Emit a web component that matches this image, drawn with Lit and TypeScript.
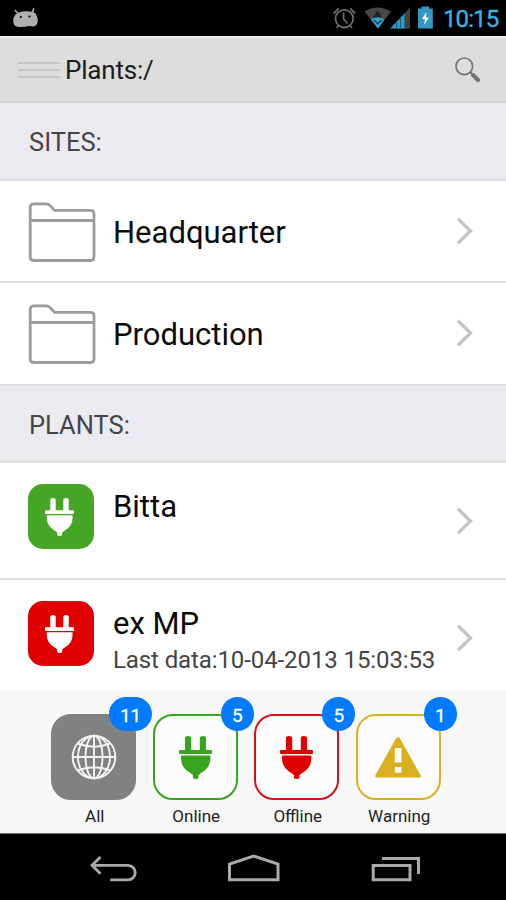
import { LitElement, html, css, svg } from "lit";
import { customElement, property } from "lit/decorators.js";
import { classMap } from "lit/directives/class-map.js";

const plug = svg`
  <path d="M5.800 2a3 2 0 0 1 6 0V14h8.400V2a3 2 0 0 1 6 0V14H31q1 0 1 1v2q0 1-1 1H1q-1 0-1-1v-2q0-1 1-1h4.800Z"/>
  <path d="M2 19.500h28.400v3q0 9.500-9 14.500l-2.500 2v2.500q0 1.500-2.700 1.500T13.500 41.500V39l-2.500-2q-9-5-9-14.500Z"/>`;

@customElement("status-bar")
class StatusBar extends LitElement {
  static styles = css`
    :host { display: flex; align-items: flex-start; justify-content: space-between; height: 36px; background: #000; box-sizing: border-box; }
    svg { display: block; }
    .right { display: flex; }
    .time { width: 63px; font: 400 24px/36px Roboto, sans-serif; color: #33b5e5; }
    .time span { display: block; letter-spacing: -0.9px; padding-top: 1px; -webkit-text-stroke: 0.3px #33b5e5; }
  `;
  render() {
    return html`
      <svg width="60" height="36" viewBox="0 0 60 36">
        <path d="M15.200 10.500l3 3M33.600 9l-1.600 4" stroke="#b0b0b0" stroke-width="1.700" stroke-linecap="round"/>
        <path d="M15.500 14.500Q19 11.500 25.500 11.300T35.500 13.200Q38 17 37.800 21T34 26.500L29 26l-4 .8-6 .2Q13.500 26.500 13.200 21.500 13.200 17 15.500 14.500Z" fill="#b0b0b0"/>
        <circle cx="20.800" cy="17" r="1.100"/><circle cx="29.500" cy="16.500" r="1.100"/>
      </svg>
      <div class="right">
        <svg width="110" height="36" viewBox="333 0 110 36">
          <g fill="none" stroke="#6c6c6c" stroke-width="1.800">
            <circle cx="344.300" cy="18.700" r="8.800"/>
            <path d="M343.600 12.500v6.500l3.800 4.500M333.600 13.500l5-5M350.200 8.500l5 5M338.500 25.500l-2 2.500M350 25.500l2 2.500"/>
          </g>
          <path d="M364.500 11.500Q377.500 3.500 390.800 11.500L378 28.500Z" fill="#484848"/>
          <path d="M377.500 10l5 9h-10Z" fill="#222"/>
          <path d="M370.800 19.500Q378 15 384.500 19.500L378 28.500Z" fill="#33a5d0"/>
          <path d="M374 20l3.800 3.800 3.800-3.800" fill="none" stroke="#143a4a" stroke-width="1.300"/>
          <path d="M410 7.500V28.500h-5V13Z" fill="#484036"/>
          <path d="M390 28.500L405 13V28.500Z" fill="#2f98c4"/>
          <path d="M396.500 21v8M400.500 17v12M404.800 13v16" stroke="#145a7a" stroke-width="1"/>
          <path d="M418 8.500h3.500v-2h7.500v2h3.800v20H418Z" fill="#3498c4"/>
          <path d="M426.500 12l-4.500 7h3l-1 6 5-7.500h-3Z" fill="#fff"/>
        </svg>
        <div class="time"><span>10:15</span></div>
      </div>`;
  }
}

@customElement("title-bar")
class TitleBar extends LitElement {
  static styles = css`
    :host { display: flex; align-items: center; height: 67px; box-sizing: border-box; background: #ddd; border-top: 2px solid #ededed; border-bottom: 2px solid #d6d6da; padding: 0 24px 0 18px; font: 26px/32px Roboto, sans-serif; color: #1c1c1c; }
    .menu { display: flex; flex-direction: column; gap: 5px; width: 42px; margin-right: 5px; }
    .menu i { height: 2px; background: #c6c6c6; }
    .title { flex: 1; letter-spacing: -0.2px; }
    svg { display: block; }
  `;
  render() {
    return html`
      <div class="menu"><i></i><i></i><i></i></div>
      <div class="title">Plants:/</div>
      <svg width="28" height="28" viewBox="454 55 28 28" fill="none" stroke="#747474">
        <circle cx="464.300" cy="65.300" r="8.300" stroke-width="1.700"/>
        <path d="M470 71l3 3" stroke-width="2"/>
        <path d="M473 74l5 5" stroke-width="4.200" stroke-linecap="round"/>
      </svg>`;
  }
}

@customElement("section-heading")
class SectionHeading extends LitElement {
  static styles = css`
    :host { display: block; height: 77.5px; box-sizing: border-box; background: #ebeaf1; border-bottom: 2px solid #dddde1; padding: 22px 29px 0; font: 25.5px/34px Roboto, sans-serif; color: #444446; }
  `;
  render() { return html`<slot></slot>`; }
}

@customElement("list-row")
class ListRow extends LitElement {
  @property() kind = "folder";
  @property() name = "";
  @property() detail = "";
  static styles = css`
    :host { display: block; background: #fff; color: #0a0a0a; font-family: Roboto, sans-serif; }
    .row { display: flex; height: 102.5px; box-sizing: border-box; padding: 0 32px 0 28px; border-bottom: 2px solid #e0e0e2; }
    .row.plant { height: 117px; }
    .icon { width: 68px; margin: 21px 17px 0 0; }
    .text { flex: 1; padding-top: 32px; }
    .plant .text { padding-top: 24px; }
    .name { font-size: 31px; line-height: 40px; }
    .detail { font-size: 24px; line-height: 30px; color: #444; margin-top: 1px; white-space: nowrap; letter-spacing: -0.1px; }
    .arrow { align-self: center; }
    .badge { width: 66px; height: 65px; box-sizing: border-box; padding: 1px 3px 0 0; border-radius: 15px; display: flex; align-items: center; justify-content: center; }
    .online { background: #46a524; }
    .offline { background: #e00000; }
    svg { display: block; }
  `;
  render() {
    const folder = this.kind === "folder";
    return html`
      <div class=${classMap({ row: true, plant: !folder })}>
        <div class="icon">
          ${folder
            ? html`<svg width="68" height="60" viewBox="0 0 68 60" fill="none" stroke="#9a9d9c" stroke-width="2.800">
                <path d="M2.200 5.500Q2.200 1.800 6 1.800H18.500Q21 1.800 22.500 4L26.500 8.400H62.500Q66 8.400 66 12V55Q66 58.500 62.500 58.500H6Q2.200 58.500 2.200 55ZM2.200 18.500H66"/></svg>`
            : html`<div class=${classMap({ badge: true, online: this.kind === "online", offline: this.kind === "offline" })}>
                <svg width="29" height="38" viewBox="0 0 32 43" preserveAspectRatio="none" fill="#fff">${plug}</svg></div>`}
        </div>
        <div class="text">
          <div class="name">${this.name}</div>
          ${this.detail ? html`<div class="detail">${this.detail}</div>` : ""}
        </div>
        <svg class="arrow" width="18" height="28" viewBox="0 0 18 28" fill="none" stroke="#c4c4c6" stroke-width="3.400"><path d="M2 1.800L14.500 14 2 26.200"/></svg>
      </div>`;
  }
}

@customElement("filter-tab")
class FilterTab extends LitElement {
  @property() kind = "all";
  @property() label = "";
  @property() count = "";
  static styles = css`
    :host { display: block; width: 85px; font-family: Roboto, sans-serif; }
    .tile { position: relative; width: 85px; height: 86px; box-sizing: border-box; border: 2px solid; border-radius: 20px; display: flex; align-items: center; justify-content: center; background: #fcfcfc; }
    .all { color: #808281; background: #808281; }
    .online { color: #38a31f; }
    .offline { color: #d8101a; }
    .offline svg { color: #e00000; }
    .warning { color: #dbb01f; }
    .count { position: absolute; top: -19px; right: -18px; min-width: 33px; height: 34px; box-sizing: border-box; padding: 3px 11px 0; border-radius: 17px; background: #007aff; color: #fff; font: 400 19px/32px Roboto, sans-serif; text-align: center; -webkit-text-stroke: 0.3px #fff; }
    .label { margin-top: 6px; text-align: center; font-size: 17px; line-height: 20px; color: #222; padding-left: 2px; }
    svg { display: block; }
  `;
  glyph() {
    if (this.kind === "all")
      return html`<svg width="46" height="46" viewBox="0 0 46 46" fill="none" stroke="#f4f4f4" stroke-width="1.900">
        <circle cx="23" cy="23" r="21.300"/><ellipse cx="23" cy="23" rx="8.500" ry="21.300"/><ellipse cx="23" cy="23" rx="16" ry="21.300"/>
        <path d="M23 1.700v42.600M1.700 23h42.600M7 9.500Q23 16 39 9.500M7 36.500Q23 30 39 36.500"/></svg>`;
    if (this.kind === "warning")
      return html`<svg width="46" height="41" viewBox="0 0 46 41"><path d="M21.200 1.300Q23 -.8 24.800 1.300L45.500 38Q46.400 40.500 44 40.500H2Q-.4 40.500 .5 38Z" fill="#dbb01f"/><path d="M19.800 11h6.600v14.500h-6.600ZM19.800 30h6.600v5.800h-6.600Z" fill="#fff"/></svg>`;
    return html`<svg width="33" height="43" viewBox="0 0 32 43" preserveAspectRatio="none" fill="currentColor">${plug}</svg>`;
  }
  render() {
    return html`
      <div class="tile ${this.kind}">${this.glyph()}<span class="count">${this.count}</span></div>
      <div class="label">${this.label}</div>`;
  }
}

@customElement("nav-bar")
class NavBar extends LitElement {
  static styles = css`
    :host { display: flex; align-items: center; justify-content: space-between; height: 67px; box-sizing: border-box; background: #000; border-top: 1px solid #777; padding: 4px 85px 0 88px; }
    svg { display: block; }
  `;
  render() {
    return html`
      <svg width="50" height="30" viewBox="88 854 50 30" fill="none" stroke="#aaa" stroke-width="2.800"><path d="M100.500 857L92 865.300l8.500 8.500M92 865.300H128a7 7 0 0 1 0 14.500H110.300"/></svg>
      <svg width="54" height="30" viewBox="227 854 54 30" fill="none" stroke="#aaa" stroke-width="3"><path d="M229.500 879.700V864L253.500 856 278 864V879.700Z"/></svg>
      <svg width="51" height="30" viewBox="370 854 51 30" fill="none" stroke="#aaa" stroke-width="3"><path d="M373.200 865.500H410V879.700H373.200ZM382 858.500H418.500V874"/></svg>`;
  }
}

@customElement("app-root")
class AppRoot extends LitElement {
  static styles = css`
    :host { display: flex; flex-direction: column; height: 900px; overflow: hidden; background: #fff; }
    main { flex: 1; min-height: 0; overflow: hidden; }
    footer { display: flex; justify-content: center; gap: 16.5px; height: 143px; box-sizing: border-box; padding: 24px 14px 0 0; background: #f8f8f8; }
  `;
  render() {
    return html`
      <status-bar></status-bar>
      <title-bar></title-bar>
      <main>
        <section-heading>SITES:</section-heading>
        <list-row name="Headquarter"></list-row>
        <list-row name="Production"></list-row>
        <section-heading>PLANTS:</section-heading>
        <list-row kind="online" name="Bitta"></list-row>
        <list-row kind="offline" name="ex MP" detail="Last data:10-04-2013 15:03:53"></list-row>
      </main>
      <footer>
        <filter-tab kind="all" label="All" count="11"></filter-tab>
        <filter-tab kind="online" label="Online" count="5"></filter-tab>
        <filter-tab kind="offline" label="Offline" count="5"></filter-tab>
        <filter-tab kind="warning" label="Warning" count="1"></filter-tab>
      </footer>
      <nav-bar></nav-bar>`;
  }
}
